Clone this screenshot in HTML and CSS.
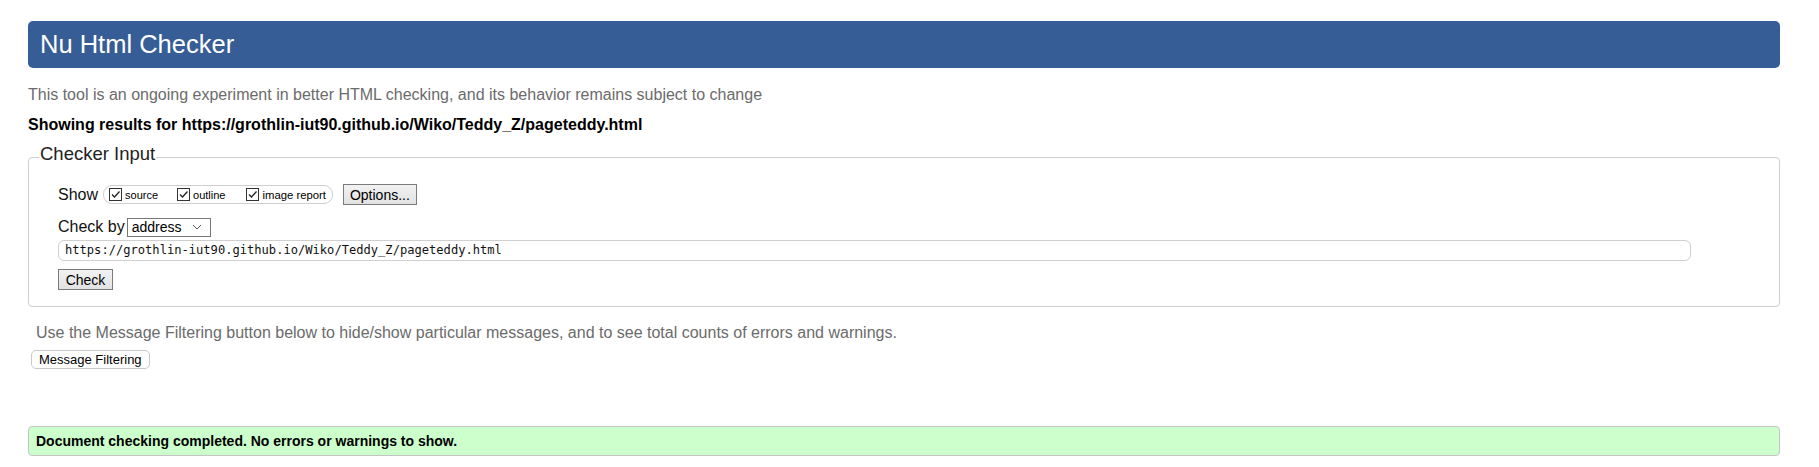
FILE: index.html
```html
<!DOCTYPE html>
<html lang="en">
<head>
<meta charset="utf-8">
<title>Nu Html Checker</title>
<link rel="stylesheet" href="styles.css">
</head>
<body>
<h1 class="title">Nu Html Checker</h1>
<p class="about">This tool is an ongoing experiment in better HTML checking, and its behavior remains subject to change</p>
<p class="showing">Showing results for https://grothlin-iut90.github.io/Wiko/Teddy_Z/pageteddy.html</p>
<fieldset class="checker">
  <legend class="legend">Checker Input</legend>
  <div class="content">
    <div class="row show-row">
      <span class="lbl">Show</span>
      <span class="group">
        <span class="opt"><span class="cb"><svg viewBox="0 0 13 13" width="13" height="13"><path d="M3 6.5 L5.5 9 L10.5 3.5" fill="none" stroke="#222" stroke-width="1.3"/></svg></span>source</span>
        <span class="opt"><span class="cb"><svg viewBox="0 0 13 13" width="13" height="13"><path d="M3 6.5 L5.5 9 L10.5 3.5" fill="none" stroke="#222" stroke-width="1.3"/></svg></span>outline</span>
        <span class="opt"><span class="cb"><svg viewBox="0 0 13 13" width="13" height="13"><path d="M3 6.5 L5.5 9 L10.5 3.5" fill="none" stroke="#222" stroke-width="1.3"/></svg></span>image report</span>
      </span>
      <span class="btn options">Options...</span>
    </div>
    <div class="row by-row">
      <span class="lbl">Check by</span>
      <span class="select">address<svg class="chev" viewBox="0 0 10 6" width="10" height="6"><path d="M1 1 L5 5 L9 1" fill="none" stroke="#555" stroke-width="1"/></svg></span>
    </div>
    <div class="url">https://grothlin-iut90.github.io/Wiko/Teddy_Z/pageteddy.html</div>
    <span class="btn check">Check</span>
  </div>
</fieldset>
<p class="note">Use the Message Filtering button below to hide/show particular messages, and to see total counts of errors and warnings.</p>
<span class="mf">Message Filtering</span>
<div class="success">Document checking completed. No errors or warnings to show.</div>
</body>
</html>
```
FILE: styles.css
```css
html, body {
  background: #fff;
}
body {
  margin: 0;
  padding: 21px 39px 0 28px;
  font-family: "Liberation Sans", Arial, sans-serif;
  color: #000;
}
.title {
  margin: 0;
  height: 47px;
  box-sizing: border-box;
  background: #365d95;
  color: #fff;
  border-radius: 5px;
  font-size: 25.5px;
  font-weight: normal;
  line-height: 47px;
  padding-left: 12px;
}
.about {
  margin: 18px 0 0 0;
  font-size: 16px;
  line-height: 18px;
  color: #6b6b6b;
}
.showing {
  margin: 12px 0 0 0;
  font-size: 16px;
  line-height: 18px;
  font-weight: bold;
}
.checker {
  margin: 10px 0 0 0;
  padding: 0 0 16px 10px;
  border: 1px solid #cfcfcf;
  border-radius: 4px;
  min-inline-size: 0;
}
.legend {
  padding: 0 1px 6px 1px;
  font-size: 18.5px;
  line-height: 20px;
  color: #222;
}
.content {
  padding-left: 19px;
  display: flex;
  flex-direction: column;
  align-items: flex-start;
}
.row {
  display: flex;
  align-items: center;
}
.show-row {
  margin-top: 14px;
  height: 21px;
}
.lbl {
  font-size: 16px;
  color: #111;
  margin-right: 3px;
}
.group {
  display: flex;
  align-items: center;
  height: 19px;
  box-sizing: border-box;
  border: 1px solid #cfcfcf;
  border-radius: 9px;
  padding: 0 6px 0 5px;
  margin-left: 2px;
}
.opt {
  display: flex;
  align-items: center;
  font-size: 11px;
  color: #000;
  margin-right: 19px;
}
.opt:nth-child(2) {
  margin-right: 21px;
}
.opt:last-child {
  margin-right: 0;
  font-size: 11.3px;
}
.cb {
  width: 13px;
  height: 13px;
  box-sizing: border-box;
  border: 1px solid #333;
  margin-right: 3px;
  display: flex;
  align-items: center;
  justify-content: center;
  background: #fff;
}
.cb svg {
  display: block;
  flex: none;
}
.btn {
  display: inline-flex;
  align-items: center;
  justify-content: center;
  box-sizing: border-box;
  border: 1px solid #7a7a7a;
  background: linear-gradient(#f2f2f2, #e2e2e2);
  font-size: 14px;
  color: #000;
  height: 21px;
}
.options {
  margin-left: 10px;
  width: 74px;
}
.by-row {
  margin-top: 12px;
  height: 20px;
}
.select {
  display: inline-flex;
  align-items: center;
  justify-content: space-between;
  box-sizing: border-box;
  width: 84px;
  height: 19px;
  border: 1px solid #777;
  font-size: 14px;
  padding: 0 8px 0 4px;
  margin-left: -1px;
}
.chev {
  display: block;
}
.url {
  margin-top: 3px;
  box-sizing: border-box;
  width: 1633px;
  height: 21px;
  border: 1px solid #cfcfcf;
  border-radius: 6px;
  font-family: "DejaVu Sans Mono", "Liberation Mono", monospace;
  font-size: 12.1px;
  line-height: 19px;
  padding-left: 6px;
  color: #111;
}
.check {
  margin-top: 8px;
  width: 55px;
}
.note {
  margin: 17px 0 0 8px;
  font-size: 16px;
  line-height: 18px;
  color: #6b6b6b;
}
.mf {
  display: inline-flex;
  align-items: center;
  box-sizing: border-box;
  height: 19px;
  margin: 8px 0 0 3px;
  padding: 0 7px;
  border: 1px solid #c9c9c9;
  border-radius: 5px;
  font-size: 13px;
  color: #000;
}
.success {
  margin-top: 57px;
  box-sizing: border-box;
  height: 30px;
  background: #ccffcc;
  border: 1px solid #c4c4c4;
  border-radius: 4px;
  font-size: 14px;
  font-weight: bold;
  line-height: 28px;
  padding-left: 7px;
}
```
